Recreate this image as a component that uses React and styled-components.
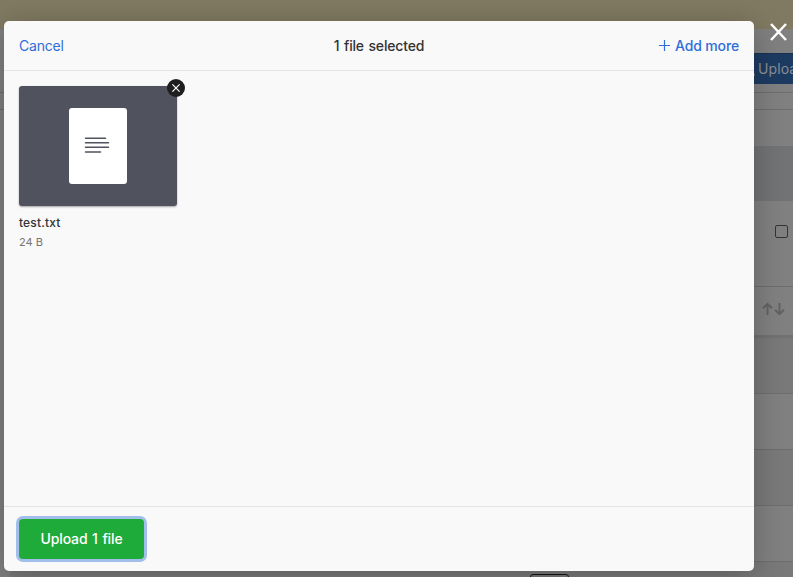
import React from "react";
import styled, { createGlobalStyle } from "styled-components";

const GlobalStyle = createGlobalStyle`
  * { box-sizing: border-box; }
  html, body { margin: 0; padding: 0; overflow: hidden; }
  button { font: inherit; border: 0; padding: 0; background: none; cursor: pointer; }
  body { font-family: Inter, "Liberation Sans", sans-serif; font-size: 14px; color: #333; }
`;

const Screen = styled.div`
  position: relative;
  width: 793px;
  height: 577px;
  overflow: hidden;
`;

const Page = styled.div`
  display: flex;
  flex-direction: column;
  height: 577px;
  background: #808080;
`;

const Band = styled.div`
  display: flex;
  flex: none;
  justify-content: flex-end;
  align-items: ${(p) => p.$align || "center"};
  height: ${(p) => p.$height}px;
  margin-left: ${(p) => (p.$inset ? 10 : 0)}px;
  background: ${(p) => p.$color || "#808080"};
  border-bottom: ${(p) => p.$line || 0}px solid ${(p) => p.$lineColor || "#6d6d6d"};
  padding-right: ${(p) => p.$right || 0}px;
`;

const PageUpload = styled.button`
  display: flex;
  justify-content: flex-start;
  align-items: center;
  gap: 3px;
  width: 50px;
  height: 31px;
  margin-top: 24px;
  padding: 0 0 1px;
  overflow: hidden;
  background: #1d3b61;
  border-top: 1px solid #173255;
  color: #8b8f95;
  font-size: 14px;
  letter-spacing: 0.1px;
  white-space: nowrap;
  svg { flex: none; }
`;

const Checkbox = styled.span`
  width: 13px;
  height: 13px;
  margin-top: 24px;
  border: 1px solid #343434;
  border-radius: 2px;
`;

const PageInput = styled.span`
  width: 39px;
  height: 20px;
  margin-top: 12px;
  flex: none;
  border: 1px solid #151515;
  border-radius: 3px;
  background: #777;
`;

const Modal = styled.section`
  position: absolute;
  left: 4px;
  top: 21px;
  width: 750px;
  height: 550px;
  display: flex;
  flex-direction: column;
  background: #f9f9f9;
  border-radius: 5px;
  box-shadow: 0 5px 30px rgba(0, 0, 0, 0.25);
`;

const Header = styled.header`
  display: grid;
  grid-template-columns: 1fr auto 1fr;
  align-items: center;
  height: 50px;
  flex: none;
  padding: 0 15px;
  border-bottom: 1px solid #e4e4e4;
`;

const LinkButton = styled.button`
  display: flex;
  align-items: center;
  gap: 5px;
  justify-self: ${(p) => (p.$end ? "end" : "start")};
  color: #2f6edb;
  font-weight: ${(p) => (p.$end ? 500 : 400)};
  letter-spacing: ${(p) => (p.$end ? -0.15 : -0.22)}px;
`;

const Title = styled.h1`
  margin: 0;
  font-size: 14px;
  font-weight: 500;
  letter-spacing: -0.17px;
  word-spacing: 1px;
`;

const Files = styled.main`
  flex: 1;
  padding: 15px;
`;

const FileCard = styled.article`
  width: 158px;
`;

const Preview = styled.div`
  position: relative;
  display: flex;
  align-items: center;
  justify-content: center;
  height: 120px;
  background: #50525e;
  border-radius: 3px;
  box-shadow: 0 1px 2px rgba(0, 0, 0, 0.35);
`;

const Paper = styled.div`
  display: flex;
  align-items: center;
  justify-content: center;
  width: 58px;
  height: 76px;
  padding: 0 2px 2px 0;
  border-radius: 3px;
  background: #fff;
`;

const RemoveButton = styled.button`
  position: absolute;
  top: -7px;
  right: -8px;
  width: 18px;
  height: 18px;
  display: flex;
  align-items: center;
  justify-content: center;
  border-radius: 50%;
  background: #1f1f1f;
`;

const FileName = styled.div`
  margin-top: 9px;
  font-size: 12px;
  line-height: 16px;
  font-weight: 500;
  letter-spacing: 0.15px;
`;

const FileSize = styled.div`
  margin-top: 4px;
  font-size: 11px;
  line-height: 14px;
  color: #757575;
`;

const Footer = styled.footer`
  display: flex;
  align-items: center;
  height: 65px;
  flex: none;
  padding: 0 15px;
  border-top: 1px solid #e4e4e4;
`;

const UploadButton = styled.button`
  width: 125px;
  height: 40px;
  padding-bottom: 2px;
  border-radius: 4px;
  background: #1fab3a;
  color: #fff;
  font-weight: 500;
  letter-spacing: -0.12px;
  word-spacing: 1px;
  box-shadow: 0 0 0 3px #a1bfea;
`;

const CloseButton = styled.button`
  position: absolute;
  left: 770px;
  top: 23px;
  width: 17px;
  height: 18px;
  display: flex;
`;

export default function App() {
  return (
    <Screen>
      <GlobalStyle />
      <Page>
        <Band $height={29} $color="#807a62" />
        <Band $height={64} $line={1} $align="flex-start">
          <PageUpload>
            <svg width="12" height="14" viewBox="0 0 12 14" fill="none" stroke="#8b8f95" strokeWidth="1.4">
              <path d="M9 9l2.500 4.500" />
            </svg>
            Upload
          </PageUpload>
        </Band>
        <Band $height={17} $line={1} />
        <Band $height={36} />
        <Band $height={55} $color="#717375" $inset />
        <Band $height={86} $line={1} $right={5} $align="flex-start" $inset>
          <Checkbox />
        </Band>
        <Band $height={51} $line={3} $lineColor="#717171" $right={8} $align="flex-start" $inset>
          <svg width="23" height="32" viewBox="0 -15 23 32" fill="none" stroke="#626262" strokeWidth="2">
            <path d="M5.500 13V2M1 6.300l4.500-4.500L10 6.300M17.500 1v11M13 7.700l4.500 4.500 4.500-4.500" />
          </svg>
        </Band>
        <Band $height={56} $line={1} $color="#797979" $inset />
        <Band $height={56} $line={1} $inset />
        <Band $height={56} $line={1} $color="#797979" $inset />
        <Band $height={56} $line={1} $inset />
        <Band $height={15} $color="#797979" $align="flex-start" $right={224} $inset>
          <PageInput />
        </Band>
      </Page>

      <Modal role="dialog">
        <Header>
          <LinkButton>Cancel</LinkButton>
          <Title>1 file selected</Title>
          <LinkButton $end>
            <svg width="11" height="11" viewBox="0 0 11 11" fill="none" stroke="currentColor" strokeWidth="1.2">
              <path d="M5.500 0v11M0 5.500h11" />
            </svg>
            Add more
          </LinkButton>
        </Header>
        <Files>
          <FileCard>
            <Preview>
              <Paper>
                <svg width="26" height="18" viewBox="0 0 26 18" fill="none" stroke="#50525e" strokeWidth="1.5" strokeLinecap="round">
                  <path d="M1.500 2.300h20M1.500 6.800h23M1.500 11.300h23M1.500 15.900h15" />
                </svg>
              </Paper>
              <RemoveButton aria-label="Remove file">
                <svg width="8" height="8" viewBox="0 0 8 8" stroke="#fff" strokeWidth="1.200">
                  <path d="M.4.4l7.200 7.200M7.600.4L.4 7.600" />
                </svg>
              </RemoveButton>
            </Preview>
            <FileName>test.txt</FileName>
            <FileSize>24 B</FileSize>
          </FileCard>
        </Files>
        <Footer>
          <UploadButton>Upload 1 file</UploadButton>
        </Footer>
      </Modal>

      <CloseButton aria-label="Close">
        <svg width="17" height="18" viewBox="0 0 17 18" stroke="#fff" strokeWidth="2.500">
          <path d="M1 1l15 16M16 1L1 17" />
        </svg>
      </CloseButton>
    </Screen>
  );
}
